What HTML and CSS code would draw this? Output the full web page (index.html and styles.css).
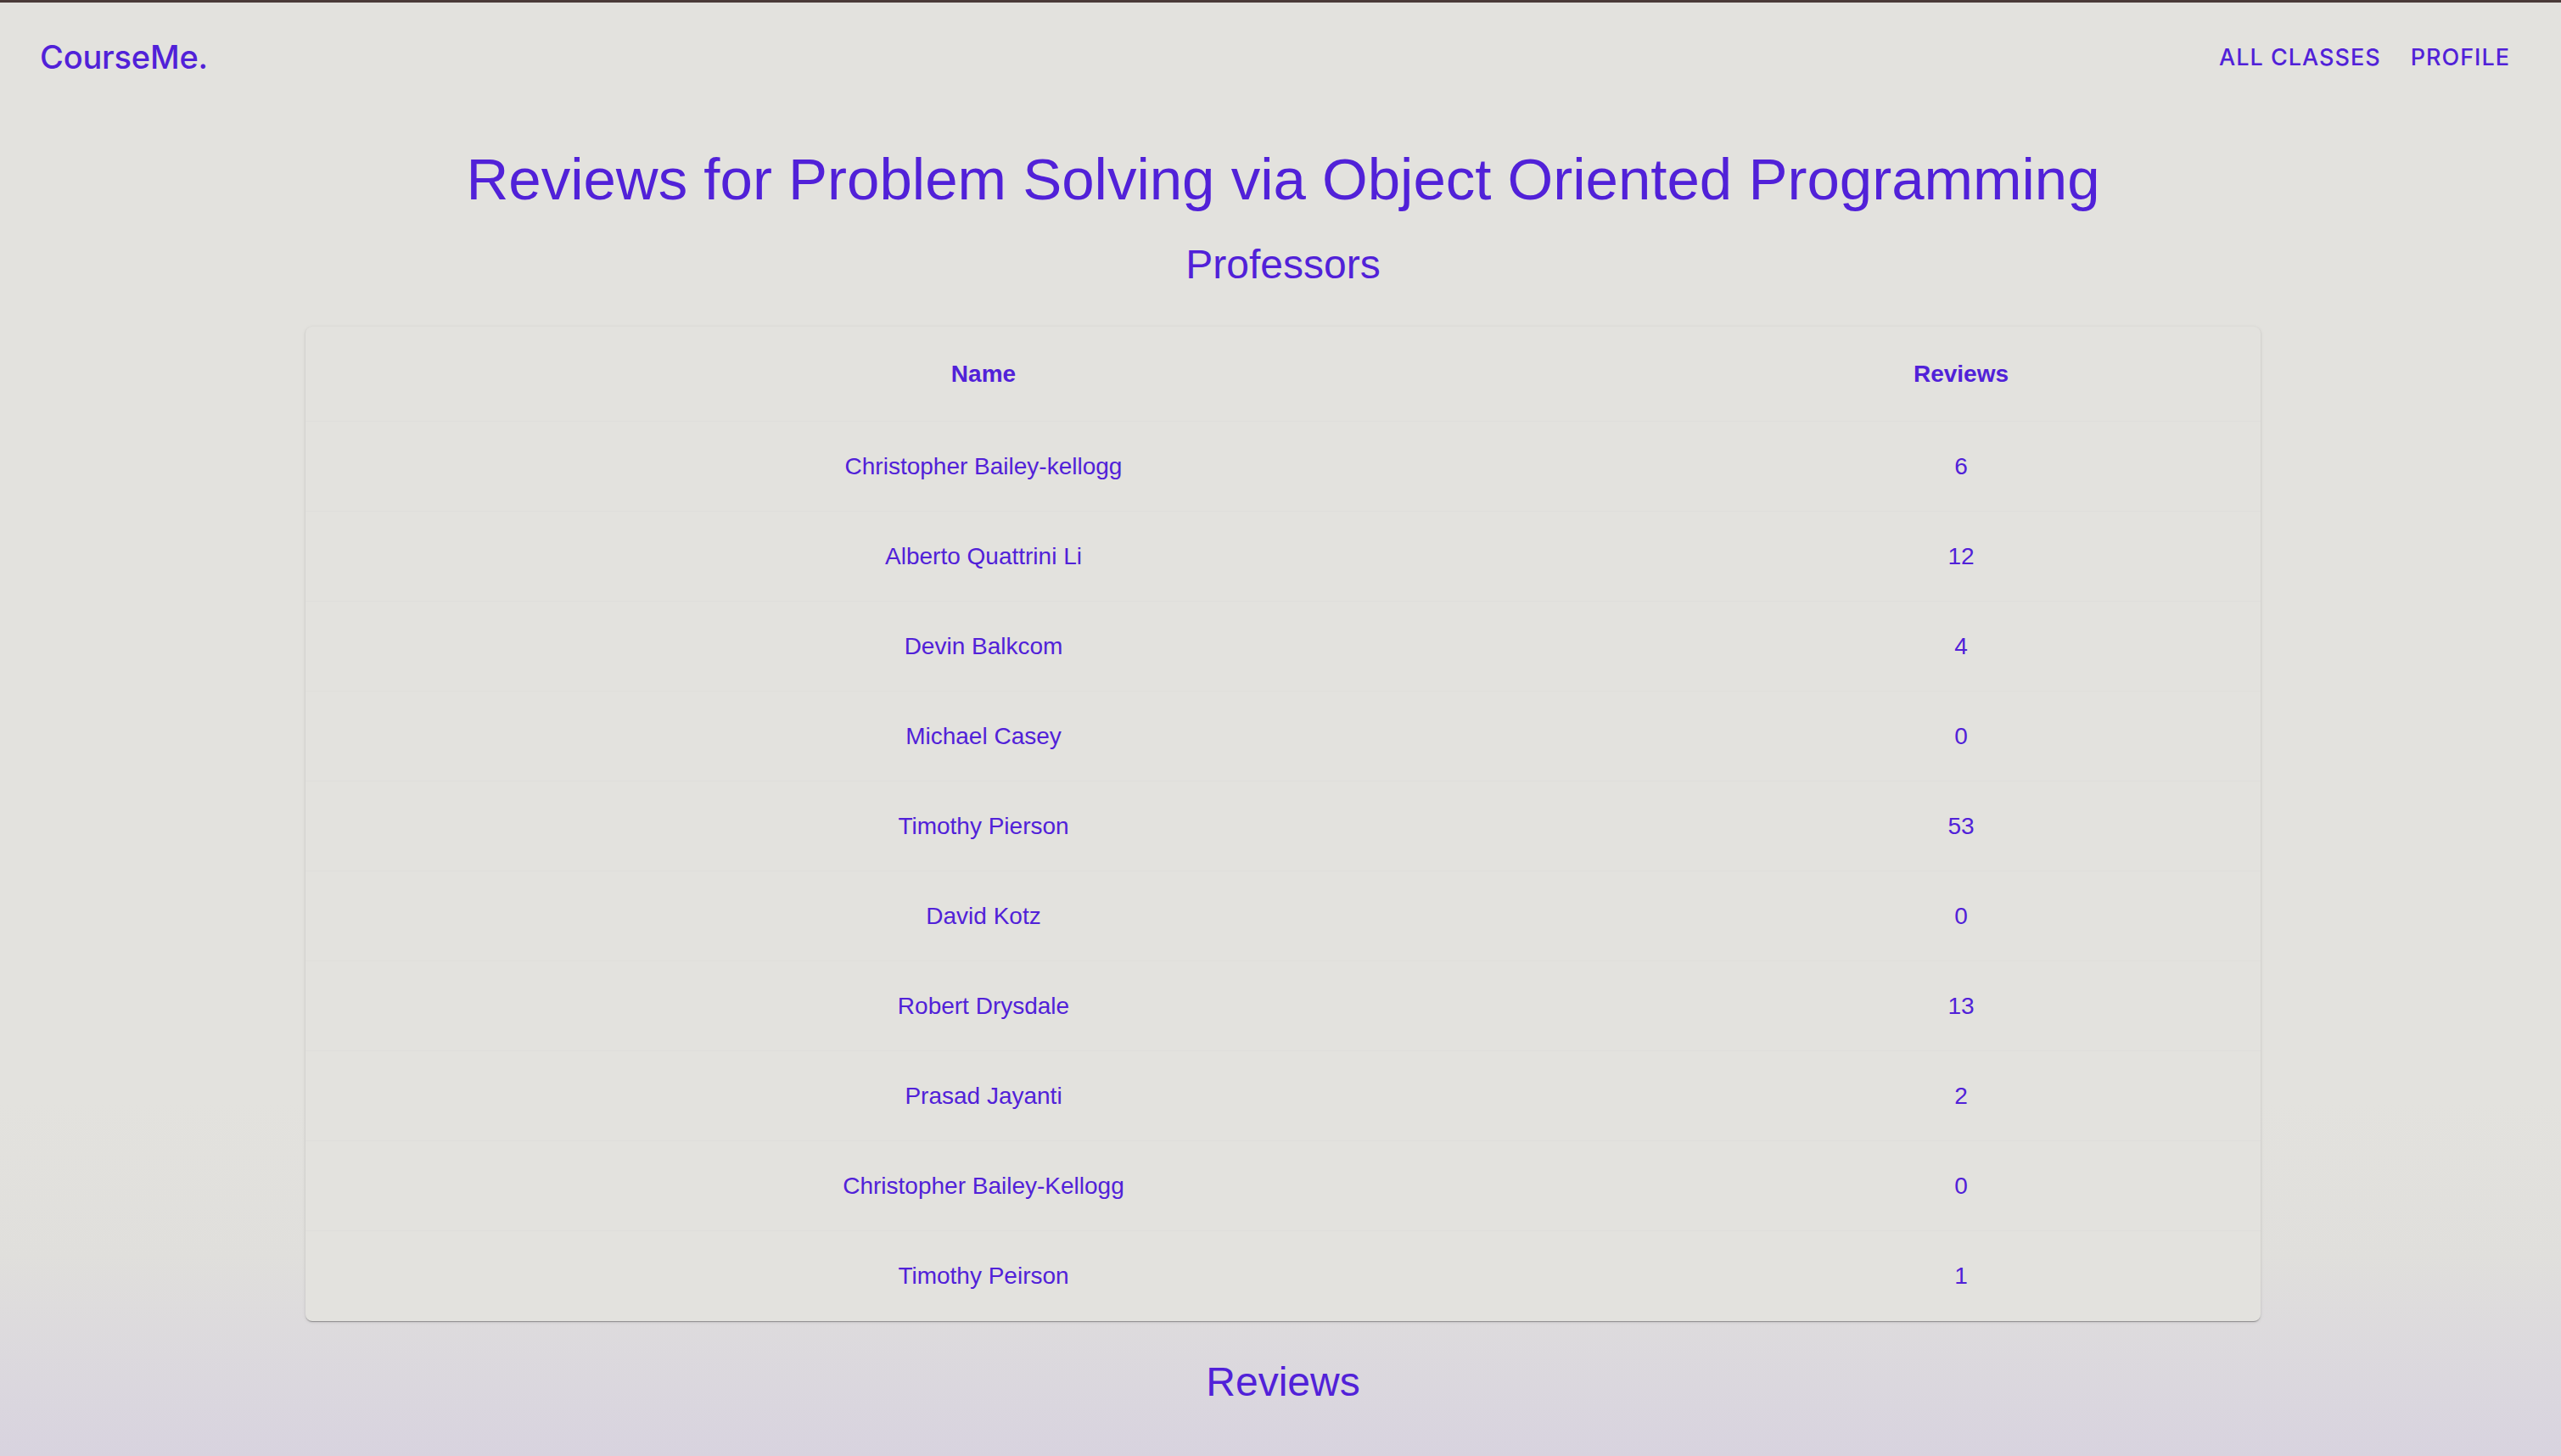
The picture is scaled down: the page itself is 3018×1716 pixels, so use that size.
FILE: index.html
```html
<!DOCTYPE html>
<html lang="en">
<head>
<meta charset="utf-8">
<title>CourseMe.</title>
<link rel="stylesheet" href="styles.css">
</head>
<body>
<header class="topbar">
  <a class="logo" href="#">CourseMe.</a>
  <nav class="nav">
    <a class="nav-link" href="#">ALL CLASSES</a>
    <a class="nav-link" href="#">PROFILE</a>
  </nav>
</header>
<main class="content">
  <h1 class="page-title">Reviews for Problem Solving via Object Oriented Programming</h1>
  <h2 class="section-title">Professors</h2>
  <div class="card">
    <table class="prof-table">
      <colgroup>
        <col class="col-name">
        <col class="col-reviews">
      </colgroup>
      <thead>
        <tr><th>Name</th><th>Reviews</th></tr>
      </thead>
      <tbody>
        <tr><td>Christopher Bailey-kellogg</td><td>6</td></tr>
        <tr><td>Alberto Quattrini Li</td><td>12</td></tr>
        <tr><td>Devin Balkcom</td><td>4</td></tr>
        <tr><td>Michael Casey</td><td>0</td></tr>
        <tr><td>Timothy Pierson</td><td>53</td></tr>
        <tr><td>David Kotz</td><td>0</td></tr>
        <tr><td>Robert Drysdale</td><td>13</td></tr>
        <tr><td>Prasad Jayanti</td><td>2</td></tr>
        <tr><td>Christopher Bailey-Kellogg</td><td>0</td></tr>
        <tr><td>Timothy Peirson</td><td>1</td></tr>
      </tbody>
    </table>
  </div>
  <h2 class="section-title reviews-title">Reviews</h2>
</main>
</body>
</html>
```
FILE: styles.css
```css
html, body {
  margin: 0;
  padding: 0;
}
body {
  min-height: 1716px;
  background: linear-gradient(to bottom, #e3e2de 0px, #e3e2de 1300px, #e0dfdc 1480px, #d8d3df 1716px);
  background-color: #d8d3df;
  color: #5121d8;
  font-family: "Liberation Sans", Arial, sans-serif;
  border-top: 3px solid #4a3a38;
  overflow: hidden;
}
a {
  color: inherit;
  text-decoration: none;
}
.topbar {
  height: 128px;
  display: flex;
  align-items: center;
  justify-content: space-between;
  padding: 0 60px 0 47px;
}
.logo {
  font-family: Inter, "Noto Sans", sans-serif;
  font-weight: 500;
  font-size: 38px;
  letter-spacing: -0.2px;
}
.nav {
  display: flex;
  gap: 35px;
}
.nav-link {
  font-family: Inter, "Noto Sans", sans-serif;
  font-weight: 500;
  font-size: 27px;
  letter-spacing: 1px;
}
.content {
  display: flex;
  flex-direction: column;
  align-items: center;
  padding-left: 6px;
}
.page-title {
  margin: 41px 0 0;
  font-weight: 400;
  font-size: 69px;
  line-height: 80px;
}
.section-title {
  margin: 32px 0 0;
  font-weight: 400;
  font-size: 48px;
  line-height: 56px;
}
.card {
  margin-top: 45px;
  width: 2304px;
  border-radius: 8px;
  background: #e3e2de;
  box-shadow: 0 2px 1px -1px rgba(0,0,0,0.25), 0 1px 2px 0 rgba(0,0,0,0.12), 0 1px 5px 0 rgba(0,0,0,0.08);
  overflow: hidden;
}
.prof-table {
  width: 100%;
  border-collapse: collapse;
  table-layout: fixed;
}
.col-name { width: 1598px; }
.col-reviews { width: 706px; }
.prof-table th,
.prof-table td {
  text-align: center;
  font-size: 28px;
  padding: 0;
  border-bottom: 1px solid #dfdedb;
}
.prof-table th {
  height: 111px;
  font-weight: 700;
}
.prof-table td {
  height: 105px;
  font-weight: 400;
}
.prof-table tbody tr:last-child td {
  border-bottom: none;
  height: 106px;
}
.reviews-title {
  margin-top: 44px;
}
```
